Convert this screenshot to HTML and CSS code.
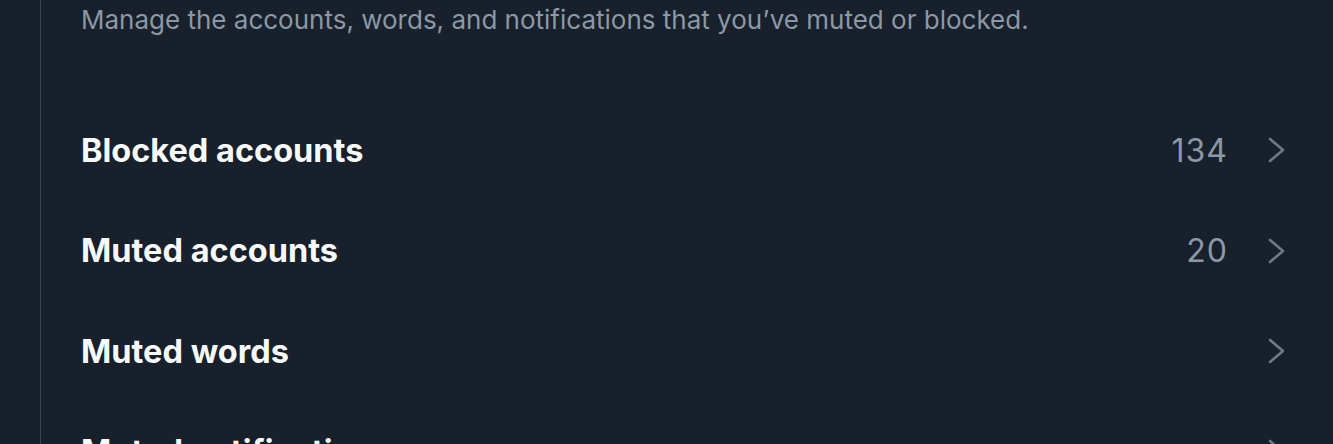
FILE: index.html
```html
<!DOCTYPE html>
<html>
<head>
<meta charset="utf-8">
<link rel="stylesheet" href="styles.css">
</head>
<body>
<div class="layout">
  <div class="rail"></div>
  <main class="content">
    <p class="subtitle">Manage the accounts, words, and notifications that you’ve muted or blocked.</p>
    <ul class="list">
      <li class="row"><span class="label">Blocked accounts</span><span class="meta"><span class="count">134</span><svg class="chev" viewBox="0 0 17 26"><path d="M2 2 L15 13 L2 24"/></svg></span></li>
      <li class="row"><span class="label">Muted accounts</span><span class="meta"><span class="count">20</span><svg class="chev" viewBox="0 0 17 26"><path d="M2 2 L15 13 L2 24"/></svg></span></li>
      <li class="row"><span class="label">Muted words</span><span class="meta"><svg class="chev" viewBox="0 0 17 26"><path d="M2 2 L15 13 L2 24"/></svg></span></li>
      <li class="row"><span class="label">Muted notifications</span><span class="meta"><svg class="chev" viewBox="0 0 17 26"><path d="M2 2 L15 13 L2 24"/></svg></span></li>
    </ul>
  </main>
</div>
</body>
</html>
```
FILE: styles.css
```css
html, body {
  margin: 0;
  padding: 0;
  background: #17202b;
  height: 100%;
  overflow: hidden;
}
.layout {
  display: flex;
  min-height: 100%;
  font-family: Inter, "Liberation Sans", sans-serif;
}
.rail {
  width: 40px;
  border-right: 1px solid #3a4550;
  flex: none;
}
.content {
  flex: 1;
  padding: 0 48px 0 40px;
}
.subtitle {
  margin: 0;
  height: 100px;
  font-size: 26px;
  line-height: 40px;
  color: #8b98a5;
}
.list {
  list-style: none;
  margin: 0;
  padding: 0;
}
.row {
  display: flex;
  align-items: center;
  justify-content: space-between;
  height: 100.5px;
}
.label {
  font-size: 32.5px;
  font-weight: 700;
  color: #f7f9f9;
}
.meta {
  display: flex;
  align-items: center;
  gap: 40px;
}
.count {
  font-size: 32px;
  letter-spacing: 1px;
  color: #8b98a5;
}
.chev {
  width: 17px;
  height: 26px;
  fill: none;
  stroke: #6e7a86;
  stroke-width: 2.6;
  stroke-linecap: round;
  stroke-linejoin: round;
}
```
